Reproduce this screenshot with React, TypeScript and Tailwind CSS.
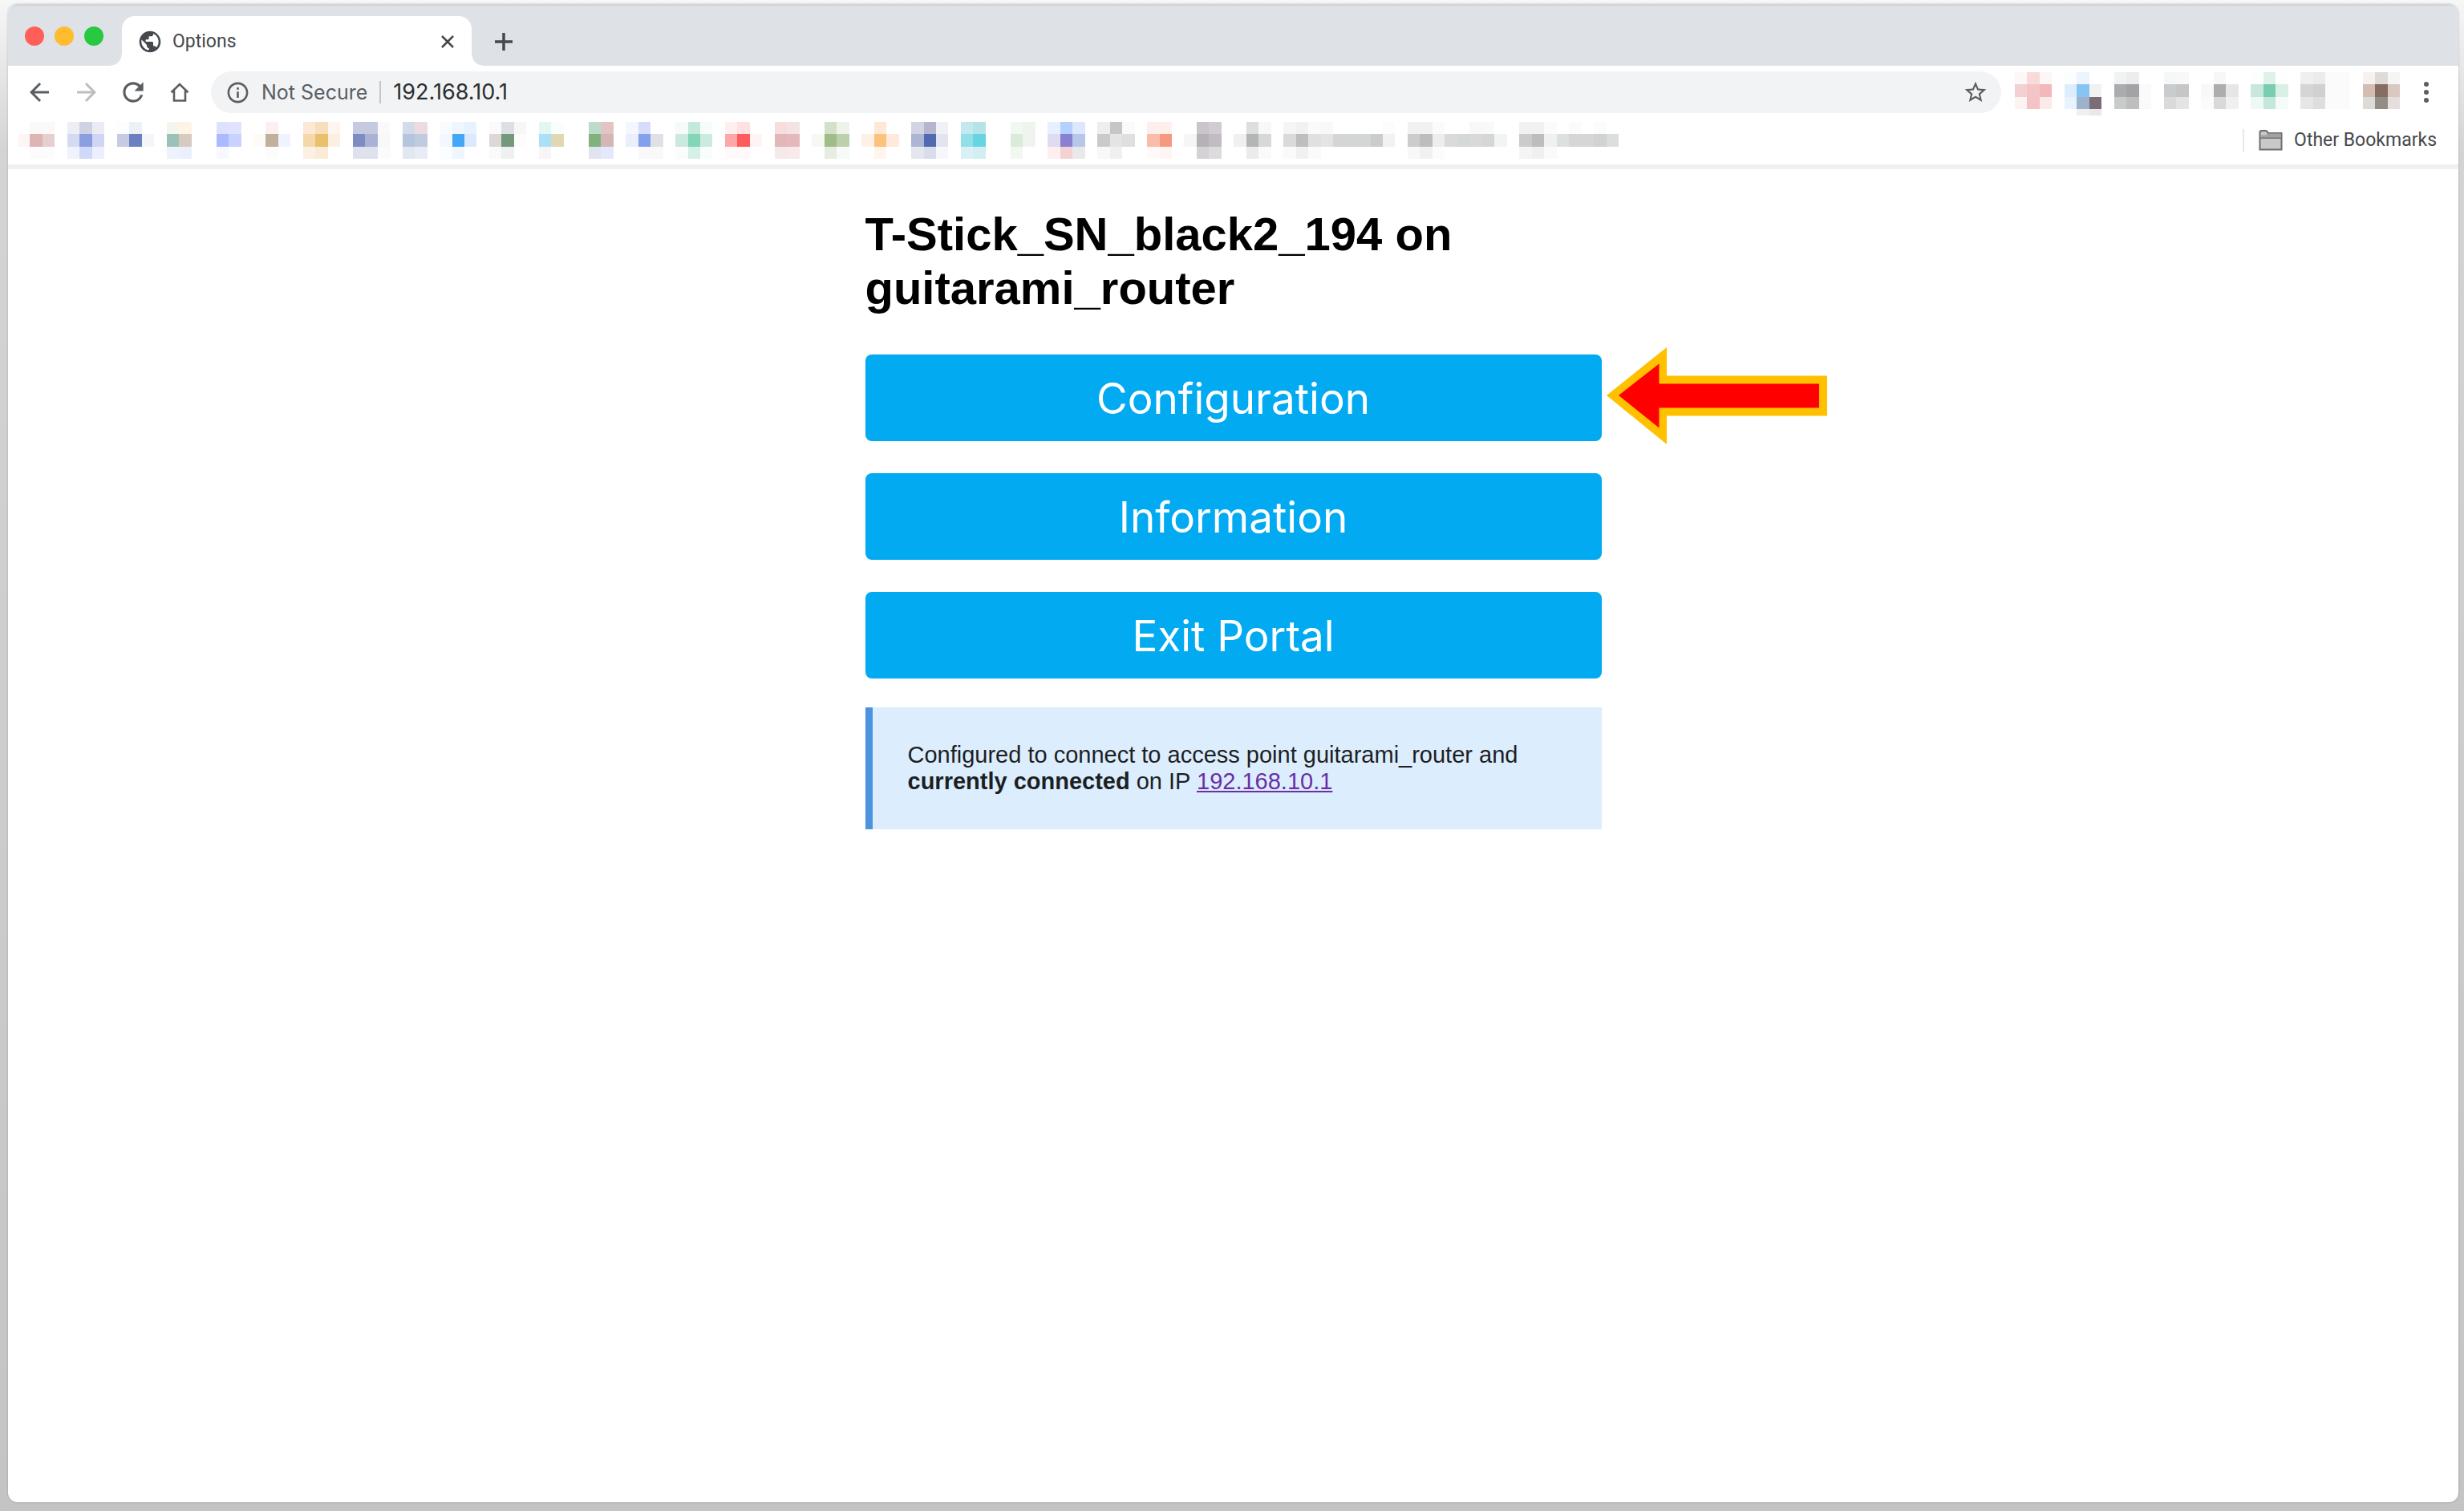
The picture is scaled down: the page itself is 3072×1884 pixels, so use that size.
import React from "react";
import {
  MdArrowBack,
  MdArrowForward,
  MdInfoOutline,
  MdPublic,
  MdRefresh,
  MdStarBorder,
} from "react-icons/md";

/* One entry per mosaic column: column index, then the colours from top to bottom ("" = empty). */
type Column = [number, ...string[]];

const bookmarkColumns: Column[] = [
  [0, "", "#fdf6f6"],
  [1, "#fbf9f7", "#deb4b4", "#fcfcfc"],
  [2, "#fbf9f7", "#e6cfcf", "#fcfcfc"],
  [4, "#ededf4", "#d4daf2", "#f0f3fe"],
  [5, "#d1d1e4", "#8b9ee0", "#d0d9fa"],
  [6, "#ebecf3", "#cfd5f2", "#eceffd"],
  [8, "#fbfefd", "#c7cae3"],
  [9, "#eef0f8", "#6c7fc0"],
  [10, "", "#f3f5f9"],
  [12, "#f2f6ee", "#9cc2b8", "#eef2fc"],
  [13, "#fef4e6", "#d7cac0", "#eceffc"],
  [16, "#dde1ff", "#abb9ff", "#f7f9ff"],
  [17, "#dfe3ff", "#c9d1ff"],
  [19, "", "#fdfbf7"],
  [20, "#fcefef", "#c1b09a", "#fcfcfa"],
  [21, "", "#f0f2ff"],
  [23, "#fbe9d6", "#f5d8aa", "#fbf0e2"],
  [24, "#f8dfbb", "#eac06c", "#faebd6"],
  [25, "#fef6ee", "#fcefe1"],
  [27, "#c5cae0", "#7d8dc4", "#dfe1ed"],
  [28, "#c5cae0", "#a9b2d5", "#dfe1ed"],
  [29, "#fafafc", "#f8f8fb", "#fbfbfd"],
  [31, "#d2dce8", "#b4c5dc", "#e2e8f0"],
  [32, "#ecdbe1", "#bfcbdf", "#e9ecf5"],
  [34, "#f9fcff", "#f3f7ff", "#fcfdff"],
  [35, "#eef6ff", "#45a6f5", "#eff6ff"],
  [36, "#e8f2fe", "#dce8fc"],
  [38, "#fbfafa", "#ddd8d6", "#fafafa"],
  [39, "#dcdfe4", "#76987a", "#eef1ef"],
  [40, "#f7f7f7", "#fcfcfc"],
  [42, "#e0f7f3", "#abe1f8", "#f8f5f7"],
  [43, "#f8fefa", "#e0d8b2"],
  [46, "#bddbc9", "#82b180", "#e0e4ef"],
  [47, "#e3c4c4", "#d4b6b7", "#e3e8fd"],
  [49, "#f5f7fe", "#ebeefd"],
  [50, "#d5ddfb", "#859fef", "#f9f9fa"],
  [51, "", "#e0e1e5", "#f9f9fa"],
  [53, "#f5fbf9", "#cbeadf", "#fafdfc"],
  [54, "#c2e9da", "#82d5b8", "#d6f0e7"],
  [55, "#f6fcf9", "#cdeadf", "#f9fdfb"],
  [57, "#fff0f0", "#ffa6a8", "#fffafa"],
  [58, "#ffe1e1", "#fd5b5c", "#fff9f9"],
  [59, "", "#fff3f3"],
  [61, "#f7dddd", "#e2b7b8", "#f5e9ea"],
  [62, "#f2e4e5", "#e5b9bb", "#fae9ea"],
  [64, "", "#f5f8f3"],
  [65, "#d4e0ca", "#a0bd88", "#e7eee1"],
  [66, "#eef3ea", "#bdd0ae", "#f8faf6"],
  [68, "", "#fef0e6"],
  [69, "#fee9d8", "#fdc27c", "#fff5ec"],
  [70, "", "#fee9dc"],
  [72, "#d2d4e3", "#adb5d5", "#e5e7f0"],
  [73, "#b5b5cf", "#4f6ab0", "#d9dce9"],
  [74, "#f0f1f6", "#e2e5ef", "#f6f7fa"],
  [76, "#c3e8ee", "#91dfe8", "#d9f1f4"],
  [77, "#b5e3e9", "#67d5e1", "#d2eef2"],
  [80, "#f2f7f1", "#daebd9", "#f2f7f1"],
  [81, "#eef5ed", "#eff5ee"],
  [83, "#e8efff", "#e0dbf0", "#feeeef"],
  [84, "#b3d0ff", "#8880d1", "#f3d2d2"],
  [85, "#dde8ff", "#b5c8e9", "#e9e9ea"],
  [87, "#eeeeee", "#cacaca", "#f8f8f8"],
  [88, "#c6c6c6", "#e4e4e4", "#f0f0f0"],
  [89, "#fafafa", "#dfdfdf"],
  [91, "#feefed", "#f9bcab", "#fffaf8"],
  [92, "#feefed", "#f59a7f", "#fff5f2"],
  [94, "", "#f6f6f6"],
  [95, "#c9c5ca", "#b6b0b7", "#d5d2d6"],
  [96, "#d0ccd1", "#c1bbc2", "#dedbdf"],
  [98, "", "#f0f0f0"],
  [99, "#dedede", "#b3b5b6", "#ebebeb"],
  [100, "#f8f8f8", "#d6d9d8", "#fafafa"],
  [102, "#f5f5f5", "#dadada", "#fafafa"],
  [103, "#f1f1f1", "#bebebe", "#f1f1f1"],
  [104, "#fafafa", "#e0e0e0", "#fafafa"],
  [105, "#f8f8f8", "#e4e4e4"],
  [106, "", "#d4d6d5"],
  [107, "", "#d4d6d5"],
  [108, "", "#d4d6d5"],
  [109, "", "#c9cdcb"],
  [110, "#fcfcfc", "#f2f2f2"],
  [112, "#f1f1f1", "#cccccc", "#f8f8f8"],
  [113, "#f1f1f1", "#bdbdbd", "#f1f1f1"],
  [114, "#fbfbfb", "#ededed", "#fcfcfc"],
  [115, "", "#dadada"],
  [116, "", "#d4d8d6"],
  [117, "#f8f8f8", "#d9d9d9"],
  [118, "#f9f9f9", "#d6d6d6"],
  [119, "", "#f0f4f3"],
  [121, "#f1f1f1", "#cbcbcb", "#f4f4f4"],
  [122, "#f1f1f1", "#bdbdbd", "#f0f0f0"],
  [123, "#fbfbfb", "#f0f0f0", "#fafafa"],
  [124, "", "#dce0de"],
  [125, "#fbfbfb", "#d6d6d6"],
  [126, "", "#d6d6d6"],
  [127, "#fbfbfb", "#d2d2d2"],
  [128, "", "#dadedc"],
];

const extensionColumns: Column[] = [
  [0, "#fdf8f8", "#f3d0d1", "#fcf3f3"],
  [1, "#f9dadb", "#f4c5c7", "#f4c3c5"],
  [2, "#fdf6f6", "#f2b8bb", "#fbeaea"],
  [4, "#fbfdff", "#dceefc", "#e8f3fe"],
  [5, "#ecf5ff", "#86c5f2", "#9fb2cb", "#f0f0f2"],
  [6, "", "#f1f1f1", "#7b6c78", "#ebe8eb"],
  [8, "#f1f2f2", "#aaacae", "#c9cbca"],
  [9, "#ededed", "#a1a3a5", "#bcbfbe"],
  [10, "", "#fafafa", "#fafafa"],
  [12, "#f6f8f8", "#c9cccd", "#dadada"],
  [13, "#f8f8f8", "#c6c6c6", "#e4e4e4"],
  [15, "", "#f8f8f8", "#fbfbfb"],
  [16, "#f7f7f7", "#adadad", "#d9d9d9"],
  [17, "", "#e6e6e6", "#f0f0f0"],
  [19, "#fbfffd", "#c8e8dd", "#eef9f5"],
  [20, "#dff2ea", "#79ceb0", "#c3e7da"],
  [21, "#fdfffe", "#d9f0e7", "#f4fbf9"],
  [23, "#efefef", "#d5d5d5", "#e6e6e6"],
  [24, "#ebebeb", "#d0d0d0", "#dedede"],
  [25, "#fbfbfb", "#fbfbfb", "#fbfbfb"],
  [26, "#fbfbfb", "#fbfbfb", "#fbfbfb"],
  [28, "#f8f2ef", "#d3bcb1", "#dddbd8"],
  [29, "#dedad9", "#866d61", "#938d87"],
  [30, "#f5f5f3", "#d9c8bf", "#e4dfde"],
];

function Mosaic({
  columns,
  cols,
  rows,
  label,
  className,
}: {
  columns: Column[];
  cols: number;
  rows: number;
  label: string;
  className: string;
}) {
  return (
    <svg
      viewBox={`0 0 ${cols} ${rows}`}
      preserveAspectRatio="none"
      role="img"
      aria-label={label}
      className={className}
      shapeRendering="crispEdges"
    >
      {columns.map(([col, ...cells]) =>
        cells.map((fill, row) =>
          fill ? <rect key={`${col}-${row}`} x={col} y={row} width="1" height="1" fill={fill} /> : null,
        ),
      )}
    </svg>
  );
}

function HomeIcon() {
  return (
    <svg viewBox="0 0 24 24" className="size-6" fill="none" stroke="currentColor" strokeWidth="2.6">
      <path d="M1.5 12.2 12 2l10.500 10.200M5 10v12.500h14V10" />
    </svg>
  );
}

function FolderIcon() {
  return (
    <svg viewBox="0 0 30 26" className="h-[26px] w-[30px]">
      <path d="M1.500 24.500V3q0-2 2-2H9q1.500 0 2 1.500l.5 1.500H28.500v20.500z" fill="#c9c9c9" stroke="#6e6e6e" strokeWidth="2" />
      <path d="M2.500 6.500h7l1.500-2h16.500v5.500h-25z" fill="#a2a2a2" />
      <path d="M1.500 10.200h27" stroke="#777" strokeWidth="1.500" />
    </svg>
  );
}

function TabStrip() {
  return (
    <header className="flex h-[77px] items-end bg-[#dee1e6] pl-[21px] shadow-[inset_0_4px_3px_-2px_#cfd1d5]">
      <div className="mb-[25px] flex gap-[13px]">
        <button aria-label="Close window" className="size-6 rounded-full bg-[#ff5f57]" />
        <button aria-label="Minimise window" className="size-6 rounded-full bg-[#febc2e]" />
        <button aria-label="Zoom window" className="size-6 rounded-full bg-[#28c840]" />
      </div>
      <div className="relative ml-[23px] flex h-[62px] w-[436px] items-center rounded-t-2xl bg-white pt-0.5 pr-[22px] pl-[19px] text-[#45494d]">
        <span className="absolute bottom-0 -left-3.5 size-3.5 bg-[radial-gradient(circle_at_0_0,#dee1e6_13px,#fff_14px)]" />
        <span className="absolute -right-3.5 bottom-0 size-3.5 bg-[radial-gradient(circle_at_100%_0,#dee1e6_13px,#fff_14px)]" />
        <MdPublic className="size-8" />
        <span className="ml-3 flex-1 text-[23px] leading-8">Options</span>
        <button aria-label="Close tab">
          <svg viewBox="0 0 16 16" className="size-4" stroke="currentColor" strokeWidth="2.5">
            <path d="M1 1l14 14M15 1l-14 14" />
          </svg>
        </button>
      </div>
      <button aria-label="New tab" className="mb-[18px] ml-7 text-[#45494d]">
        <svg viewBox="0 0 24 24" className="size-6" stroke="currentColor" strokeWidth="3.500">
          <path d="M12 1v22M1 12h22" />
        </svg>
      </button>
    </header>
  );
}

function Toolbar() {
  return (
    <div className="flex h-[66px] items-center pl-[21px] text-[#5a5e63]">
      <button aria-label="Back"><MdArrowBack className="size-9" /></button>
      <button aria-label="Forward" className="ml-[23px] text-[#bcbec1]"><MdArrowForward className="size-9" /></button>
      <button aria-label="Reload" className="ml-[21px]"><MdRefresh className="size-[38px]" /></button>
      <button aria-label="Home" className="ml-[27px]"><HomeIcon /></button>
      <div className="ml-[27px] flex h-[52px] flex-1 items-center rounded-full bg-[#f1f3f4] pr-4 pl-[18px] font-[Inter,sans-serif] leading-8">
        <button className="flex items-center gap-3.5 text-[25px]">
          <MdInfoOutline className="size-[31px]" />
          Not Secure
        </button>
        <span className="mx-[15px] h-7 w-0.5 bg-[#c4c7ca]" />
        <input aria-label="Address" defaultValue="192.168.10.1" className="min-w-0 flex-1 bg-transparent text-[27px] text-[#2b2d30] outline-none" />
        <button aria-label="Bookmark this page"><MdStarBorder className="size-8" /></button>
      </div>
      <Mosaic columns={extensionColumns} cols={31} rows={3.5} label="Extensions" className="mt-2 ml-[17px] h-[54px] w-[480px] self-start" />
      <button aria-label="Menu" className="mr-[37px] ml-[30px]">
        <svg viewBox="0 0 6 26" className="h-[26px] w-1.5" fill="currentColor">
          <circle cx="3" cy="3" r="3" />
          <circle cx="3" cy="13" r="3" />
          <circle cx="3" cy="23" r="3" />
        </svg>
      </button>
    </div>
  );
}

function BookmarksBar() {
  return (
    <div className="flex h-[63px] items-center border-b-[6px] border-[#f0f0f0] pr-[27px] pb-[3px] pl-3">
      <Mosaic columns={bookmarkColumns} cols={129} rows={3} label="Bookmarks" className="h-[46px] w-[1996px]" />
      <span className="ml-auto h-7 w-0.5 bg-[#e8e8e8]" />
      <button className="ml-[18px] flex items-center gap-3.5 text-[23px] leading-7 text-[#45484c]">
        <FolderIcon />
        Other Bookmarks
      </button>
    </div>
  );
}

function PointerArrow() {
  return (
    <svg viewBox="0 0 276 121" className="absolute -top-[9px] left-full ml-1.5 h-[121px] w-[276px]" aria-hidden="true">
      <path d="M0 60 75 0v35.500h200v50H75V121z" fill="#ffc000" />
      <path d="M15 60 65.500 20.500v25h199.500v30H65.500v25z" fill="#ff0000" />
    </svg>
  );
}

const portalButton =
  "h-[108px] w-full rounded-lg bg-[#02aaf1] pt-0.5 font-[Inter,sans-serif] text-[53px] leading-[106px] text-white";

function Portal() {
  return (
    <main className="mx-auto w-[918px] pt-[47px] font-['Liberation_Sans',Arial,sans-serif] text-black">
      <h1 className="text-[58px] leading-[67px] font-bold">T-Stick_SN_black2_194 on guitarami_router</h1>
      <div className="mt-[50px] flex flex-col gap-10">
        <div className="relative">
          <button className={portalButton}>Configuration</button>
          <PointerArrow />
        </div>
        <button className={portalButton}>Information</button>
        <button className={portalButton}>Exit Portal</button>
      </div>
      <p className="mt-9 border-l-[9px] border-[#4b92df] bg-[#dcedfe] px-11 py-[43px] text-[29px] leading-[33px] text-[#1c1f22]">
        Configured to connect to access point guitarami_router and <strong>currently connected</strong> on IP{" "}
        <a href="http://192.168.10.1" className="text-[#6a2fa5] underline">192.168.10.1</a>
      </p>
    </main>
  );
}

export default function App() {
  return (
    <div className="flex min-h-screen flex-col bg-linear-to-b from-[#f7f7f7] via-[#d4d4d4] via-10% to-[#c4c4c4] pt-[5px] pr-[7px] pb-[11px] pl-[10px] font-[Roboto,sans-serif]">
      <div className="flex-1 overflow-hidden rounded-xl bg-white shadow-[0_0_3px_rgba(0,0,0,0.2)]">
        <TabStrip />
        <Toolbar />
        <BookmarksBar />
        <Portal />
      </div>
    </div>
  );
}
